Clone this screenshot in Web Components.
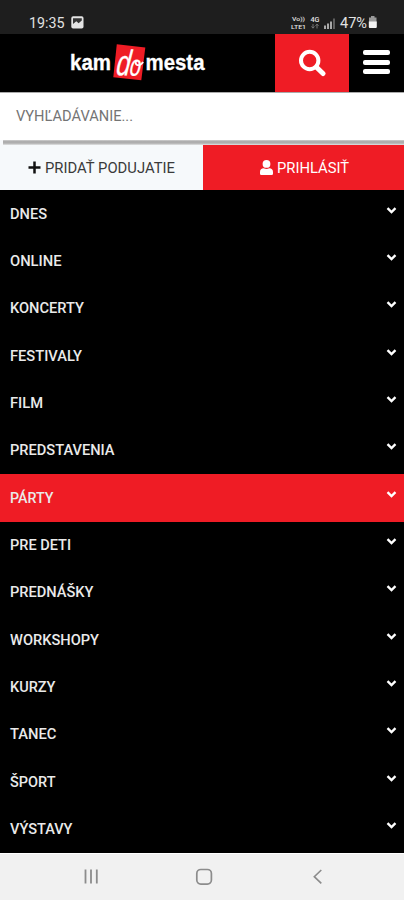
<!DOCTYPE html>
<html lang="sk">
<head>
<meta charset="utf-8">
<title>kam do mesta</title>
<style>
html,body{margin:0;padding:0;background:#000}
body{font-family:Roboto,"Liberation Sans",sans-serif}
</style>
</head>
<body>
<city-app></city-app>
<script>
const define = (name, html) => customElements.define(name, class extends HTMLElement {
  constructor() {
    super();
    const t = document.createElement('template');
    t.innerHTML = html;
    this.attachShadow({mode: 'open'}).append(t.content.cloneNode(true));
  }
});

/* Label whose text is fitted to an exact width. */
customElements.define('fit-label', class extends HTMLElement {
  connectedCallback() {
    if (this.shadowRoot) return;
    const w = this.getAttribute('w'), s = this.getAttribute('size') || 15;
    this.attachShadow({mode: 'open'}).innerHTML = `
      <style>:host{display:block;flex:none}svg{display:block;overflow:visible}
      text{font-family:Roboto,"Liberation Sans",sans-serif;font-size:${s}px;font-weight:${this.getAttribute('weight') || 400};fill:currentColor}</style>
      <svg width="${w}" height="16"><text x="0" y="13" textLength="${w}" lengthAdjust="spacingAndGlyphs">${this.getAttribute('text')}</text></svg>`;
  }
});

define('status-bar', `<style>
:host{display:flex;height:34px;background:#1e1e1e;color:#e2e2e2;box-sizing:border-box;padding:15px 26px 0 29px;align-items:flex-start}
svg{display:block;overflow:visible}.sp{flex:1}.photo{margin:1px 0 0 6px}
.net{margin-top:-1px}
.net text{font-family:Roboto,sans-serif;font-weight:500;fill:#e2e2e2}
.pct{margin-left:5px}.bat{margin:1px 0 0 1px}
</style>
<fit-label text="19:35" w="35.5" size="14.5"></fit-label>
<svg class="photo" width="13" height="13"><rect x=".3" y=".3" width="12.2" height="12.2" rx="1.8" fill="#e4e4e4"/><path d="M2 2.300h8.800v2.200L7.600 7.300 5.300 5.300 2 8z" fill="#343434"/><path d="M2 9.300 5.200 6.800l2.400 2 3.200-2.600V9.500H2z" fill="#e4e4e4"/></svg>
<span class="sp"></span>
<svg class="net" width="43" height="16"><text x="0" y="7" font-size="6" textLength="13" lengthAdjust="spacingAndGlyphs">Vo))</text><text x="-1" y="14.500" font-size="6" textLength="15" lengthAdjust="spacingAndGlyphs">LTE1</text><text x="18.500" y="8" font-size="7" textLength="9" lengthAdjust="spacingAndGlyphs">4G</text>
<path d="M21 10v4m-1.500-1.500 1.500 1.700 1.500-1.700M25 14.500v-4m-1.500 1.300L25 10.100l1.500 1.700" stroke="#777" fill="none"/>
<path d="M33 11.500v3.500M36 9.500v5.500M39 7.500v7.500" stroke="#b8b8b8" stroke-width="1.800"/><path d="M42 4.500v10.500" stroke="#666" stroke-width="1.800"/></svg>
<fit-label class="pct" text="47%" w="27" size="14.500"></fit-label>
<svg class="bat" width="10" height="13"><path d="M3 0h3.500v1.500h2v5H1v-5h2z" fill="#999"/><path d="M.8 5.500h8V11a1 1 0 0 1-1 1h-6a1 1 0 0 1-1-1z" fill="#f2f2f2"/></svg>`);

define('site-logo', `<style>:host{display:block}svg{display:block;overflow:visible}text{font-family:"Liberation Sans",Arial,sans-serif;font-weight:700;fill:#fff;stroke:#fff;stroke-width:.3px}.do{font-family:"Liberation Sans",sans-serif;font-style:italic;font-weight:400}</style>
<svg width="136" height="38">
<text x="0" y="27" font-size="22" textLength="41" lengthAdjust="spacingAndGlyphs">kam</text>
<path d="M46.800 1.200 75.300 4.500 71.300 37.200 43.300 34.200z" fill="#ef1c25"/>
<g transform="translate(45.500 32) rotate(2) skewX(-5)"><text class="do" font-size="36" textLength="14" lengthAdjust="spacingAndGlyphs">d</text><text class="do" x="13.500" font-size="30" textLength="11" lengthAdjust="spacingAndGlyphs">o</text><path d="M19-15c-2 5 4 6 7 1" fill="none" stroke="#fff" stroke-width="1.800"/></g>
<text x="75.500" y="27" font-size="22" textLength="59" lengthAdjust="spacingAndGlyphs">mesta</text>
</svg>`);

define('site-header', `<style>
:host{display:flex;height:58px;background:#000}
site-logo{margin:9px 0 0 70px;width:205px}
.search{width:73.500px;background:#ef1c25;display:flex;align-items:center;justify-content:center}
.menu{flex:1;display:flex;flex-direction:column;gap:4.500px;padding:16px 0 0 14.500px}
i{display:block;width:27px;height:5px;border-radius:2px;background:#fff}
svg{display:block}
</style>
<site-logo></site-logo>
<div class="search"><svg width="28" height="28" fill="none" stroke="#fff"><circle cx="11.700" cy="11.500" r="8.700" stroke-width="4"/><path d="M18.500 18.300 25 24.500" stroke-width="5" stroke-linecap="round"/></svg></div>
<div class="menu"><i></i><i></i><i></i></div>`);

define('search-field', `<style>
:host{display:block;height:53px;background:#f7f9fb}
.box{height:48px;background:#fff;box-sizing:border-box;border-top:1px solid #aaa;padding:15px 0 0 16px;color:#747474}
.line{height:5px;margin-left:3px;background:linear-gradient(#cfcfcf,#a9a9a9 35%,#b3b3b3 65%,#e2e4e5)}
</style><div class="box"><fit-label text="VYHĽADÁVANIE..." w="117" size="15"></fit-label></div><div class="line"></div>`);

define('action-bar', `<style>
:host{display:flex;height:45px}
div{display:flex;align-items:center;box-sizing:border-box}
.add{width:203px;background:#f6f9fb;color:#3a3a3a;padding-left:28px;gap:4px}
.login{flex:1;background:#ef1c25;color:#fff;padding-left:57px;gap:4px}
svg{display:block}
</style>
<div class="add"><svg width="13" height="13"><path d="M6.500 .5v12M.5 6.500h12" stroke="#111" stroke-width="2.500"/></svg><fit-label text="PRIDAŤ PODUJATIE" w="130" size="15.500"></fit-label></div>
<div class="login"><svg width="13" height="15" fill="#fff"><circle cx="6.500" cy="3.900" r="3.900"/><path d="M0 13.700V12c0-2.500 1.500-3.700 3.700-3.700 1.800.9 3.800.9 5.600 0 2.200 0 3.700 1.200 3.700 3.700v1.700Q13 15 11.700 15H1.300Q0 15 0 13.700z"/></svg><fit-label text="PRIHLÁSIŤ" w="72" size="15.500"></fit-label></div>`);

customElements.define('menu-row', class extends HTMLElement {
  connectedCallback() {
    if (this.shadowRoot) return;
    this.attachShadow({mode: 'open'}).innerHTML = `
      <style>:host{flex:1;display:flex;justify-content:space-between;box-sizing:border-box;padding:15.500px 7px 0 10px;color:#eaeaea}
      :host([active]){background:#ef1c25}
      svg{display:block}</style>
      <fit-label text="${this.getAttribute('label')}" w="${this.getAttribute('w')}" size="15.500" weight="500"></fit-label>
      <svg width="11" height="9"><path d="M1.500 2.200 5.500 6 9.500 2.200" fill="none" stroke="#fff" stroke-width="2.400"/></svg>`;
  }
});

define('nav-bar', `<style>
:host{display:block;height:47px;background:#f1f1f1;box-sizing:border-box;border-top:1px solid #fff}
svg{display:block}</style>
<svg width="404" height="46" fill="none" stroke="#8c8c8c"><path d="M85.500 15.500v14M91 15.500v14M96.800 15.500v14" stroke-width="1.800"/><rect x="196.800" y="15.500" width="14.600" height="14.600" rx="4" stroke-width="1.700"/><path d="M321.300 16 314.300 22.700l7 6.700" stroke-width="1.600"/></svg>`);

const rows = [['DNES',37],['ONLINE',51.5],['KONCERTY',74],['FESTIVALY',72],['FILM',33],['PREDSTAVENIA',104.5],['PÁRTY',43.5],['PRE DETI',61],['PREDNÁŠKY',83.5],['WORKSHOPY',89],['KURZY',45.5],['TANEC',46.5],['ŠPORT',45.5],['VÝSTAVY',62.5]];
define('city-app', `<style>
:host{display:flex;flex-direction:column;width:404px;height:900px;overflow:hidden}
status-bar,site-header,search-field,action-bar,nav-bar{flex:none}
nav{flex:1;display:flex;flex-direction:column;background:#000}
</style>
<status-bar></status-bar><site-header></site-header><search-field></search-field><action-bar></action-bar>
<nav>${rows.map(([l,w]) => `<menu-row label="${l}" w="${w}"${l === 'PÁRTY' ? ' active' : ''}></menu-row>`).join('')}</nav>
<nav-bar></nav-bar>`);
</script>
</body>
</html>
